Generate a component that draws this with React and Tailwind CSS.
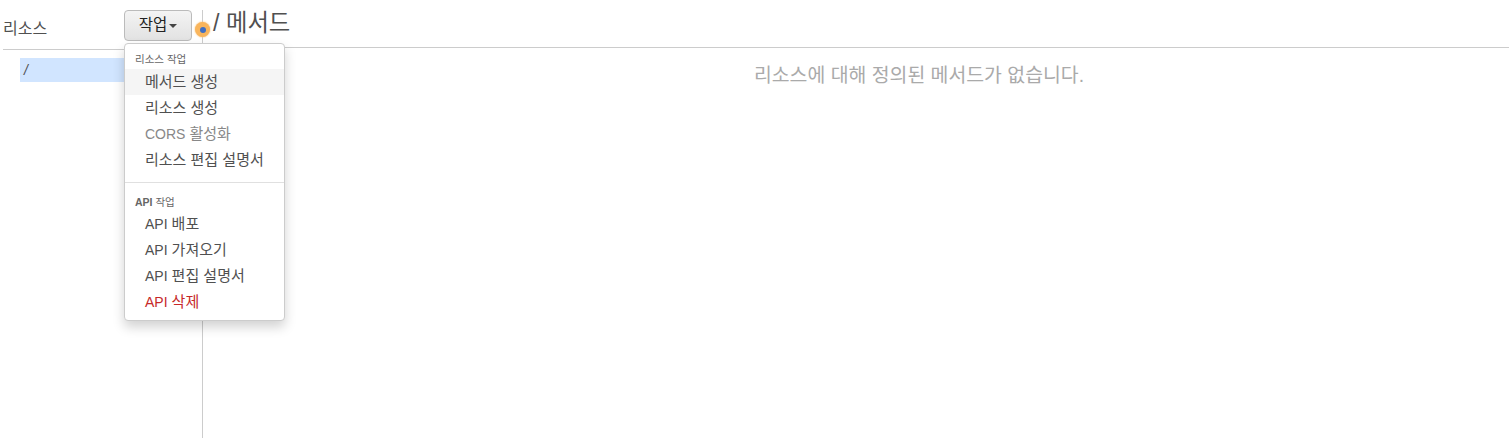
export default function App() {
  const Item = ({ children, cls = "text-[#505050]", active }) => (
    <div className={`h-[26px] pl-[20px] flex items-center text-[15px] ${cls} ${active ? "bg-[#f5f5f5]" : ""}`}>{children}</div>
  );
  const L = ({ children }) => <span className="mr-[4px] text-[14px]">{children}</span>;
  return (
    <div className="relative flex h-[438px] w-[1509px] overflow-hidden bg-white text-[#333] font-['Liberation_Sans','Noto_Sans_CJK_KR',sans-serif]">
      <div className="w-[202px] shrink-0 pl-[3px]">
        <div className="h-[50px] border-b border-[#ccc] flex">
          <div className="pt-[20px] text-[16px] leading-[18px] text-[#505050] w-[121px]">리소스</div>
          <div className="mt-[10px] h-[31px] w-[68px] flex items-center justify-center gap-[2px] rounded-[4px] border border-[#bbb] bg-gradient-to-b from-[#f4f4f4] to-[#e2e2e2] text-[15.5px] text-[#222]">
            <span className="pb-[1px]">작업</span>
            <span className="mt-[1px] h-0 w-0 border-x-[4px] border-t-[4px] border-x-transparent border-t-[#444]" />
          </div>
        </div>
        <div className="ml-[17px] mt-[8px] h-[24px] bg-[#d1e5ff] pl-[4px] text-[14px] italic leading-[24px] text-[#505050]">/</div>
      </div>
      <div className="mt-[10px] flex-1 border-l border-[#ccc]">
        <div className="h-[38px] border-b border-[#ccc] pl-[10px] text-[23.3px] leading-[26px] text-[#505050]">/ 메서드</div>
        <div className="mt-[14px] pl-[126px] text-center text-[19.4px] leading-[26px] text-[#aaa]">리소스에 대해 정의된 메서드가 없습니다.</div>
      </div>

      <div className="absolute left-[195px] top-[22px] flex h-[15px] w-[15px] items-center justify-center rounded-full bg-[#f9b55c] shadow-[0_0_2px_#f9b55c]">
        <div className="h-[6px] w-[6px] rounded-full bg-[#3f6fc4]" />
      </div>

      <div className="absolute left-[124px] top-[43px] h-[278px] w-[161px] rounded-[4px] border border-[#ccc] bg-white shadow-[0_6px_12px_rgba(0,0,0,0.18)]">
        <div className="h-[25px] pl-[10px] pt-[9px] text-[10.5px] leading-[13px] text-[#666]">리소스 작업</div>
        <Item active>메서드 생성</Item>
        <Item>리소스 생성</Item>
        <Item cls="text-[#888]"><L>CORS</L>활성화</Item>
        <Item>리소스 편집 설명서</Item>
        <div className="mt-[9px] h-px bg-[#e0e0e0]" />
        <div className="h-[28px] pl-[10px] pt-[13px] text-[10.5px] leading-[13px] text-[#666]"><span className="font-bold">API</span> 작업</div>
        <Item><L>API</L>배포</Item>
        <Item><L>API</L>가져오기</Item>
        <Item><L>API</L>편집 설명서</Item>
        <Item cls="text-[#c62828]"><L>API</L>삭제</Item>
      </div>
    </div>
  );
}
